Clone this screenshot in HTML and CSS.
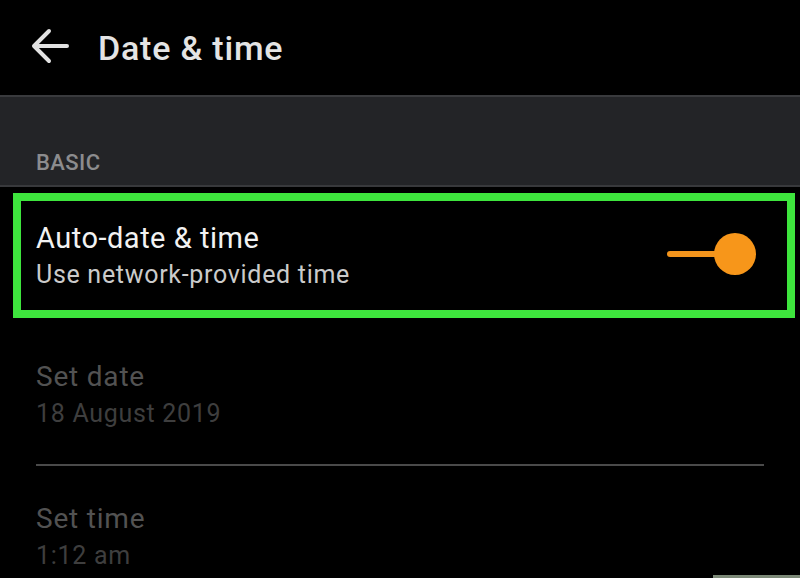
FILE: index.html
```html
<!DOCTYPE html>
<html lang="en">
<head>
    <meta charset="UTF-8">
    <meta name="viewport" content="width=device-width, initial-scale=1.0">
    <title>Date &amp; time</title>
    <link rel="stylesheet" href="styles.css">
</head>
<body>
    <div class="screen">
        <header class="app-bar">
            <svg class="back" width="38" height="36" viewBox="0 0 38 36">
                <path d="M36 18H4M18 3L3 18l15 15" fill="none" stroke="#e2e2e2" stroke-width="4" stroke-linecap="round" stroke-linejoin="round"/>
            </svg>
            <h1>Date &amp; time</h1>
        </header>

        <div class="section-head">
            <span>BASIC</span>
        </div>

        <!-- highlighted setting -->
        <div class="highlight">
            <div class="setting">
                <div class="text">
                    <div class="title">Auto-date &amp; time</div>
                    <div class="summary">Use network-provided time</div>
                </div>
                <svg class="switch" width="90" height="44" viewBox="0 0 90 44">
                    <line x1="4" y1="22" x2="60" y2="22" stroke="#f3941c" stroke-width="6" stroke-linecap="round"/>
                    <circle cx="69" cy="22" r="21" fill="#f7961a"/>
                </svg>
            </div>
        </div>

        <div class="item first">
            <div class="title">Set date</div>
            <div class="summary">18 August 2019</div>
        </div>
        <div class="item">
            <div class="title">Set time</div>
            <div class="summary">1:12 am</div>
        </div>

        <div class="mark"></div>
    </div>
</body>
</html>
```

FILE: styles.css
```css
body {
    margin: 0;
    background-color: #000;
    font-family: Roboto, "Noto Sans", sans-serif;
}
.screen {
    position: relative;
    width: 800px;
    height: 578px;
    overflow: hidden;
    background-color: #000;
}
.app-bar {
    height: 95px;
    display: flex;
    align-items: center;
    padding-left: 31px;
    border-bottom: 2px solid #393a3d;
}
.back {
    margin-top: -3px;
}
.app-bar h1 {
    margin: 0 0 0 29px;
    font-size: 34px;
    font-weight: 500;
    letter-spacing: 0.8px;
    color: #e4e4e4;
}
.section-head {
    height: 90px;
    background-color: #232427;
    border-bottom: 2px solid #38393c;
    display: flex;
    align-items: flex-end;
    padding-left: 36px;
    box-sizing: border-box;
}
.section-head span {
    font-size: 22px;
    font-weight: 500;
    letter-spacing: 0.4px;
    color: #8c8c8e;
    line-height: 26px;
    margin-bottom: 9px;
}
/* green frame */
.highlight {
    margin: 6px 5px 0 13px;
    border: 8px solid #3ee53d;
    height: 109px;
    display: flex;
    align-items: center;
}
.setting {
    flex: 1;
    display: flex;
    align-items: center;
    justify-content: space-between;
    padding: 0 31px 0 15px;
}
.setting .title {
    font-size: 29px;
    line-height: 38px;
    letter-spacing: 0.5px;
    color: #f2f2f2;
}
.setting .summary {
    font-size: 25px;
    line-height: 36px;
    letter-spacing: 0.7px;
    color: #cbcbcb;
}
.switch {
    margin-bottom: 3px;
}
.item {
    margin: 0 36px;
    padding: 34px 0 32px;
    border-bottom: 2px solid #4a4a4a;
}
.item.first {
    margin-top: 6px;
}
.item .title {
    font-size: 28px;
    line-height: 38px;
    letter-spacing: 0.8px;
    color: #525252;
}
.item .summary {
    font-size: 25px;
    line-height: 36px;
    letter-spacing: 0.7px;
    color: #3e3e3e;
}
.mark {
    position: absolute;
    right: 0;
    bottom: 0;
    width: 87px;
    height: 3px;
    background-color: #7c8977;
}
```
